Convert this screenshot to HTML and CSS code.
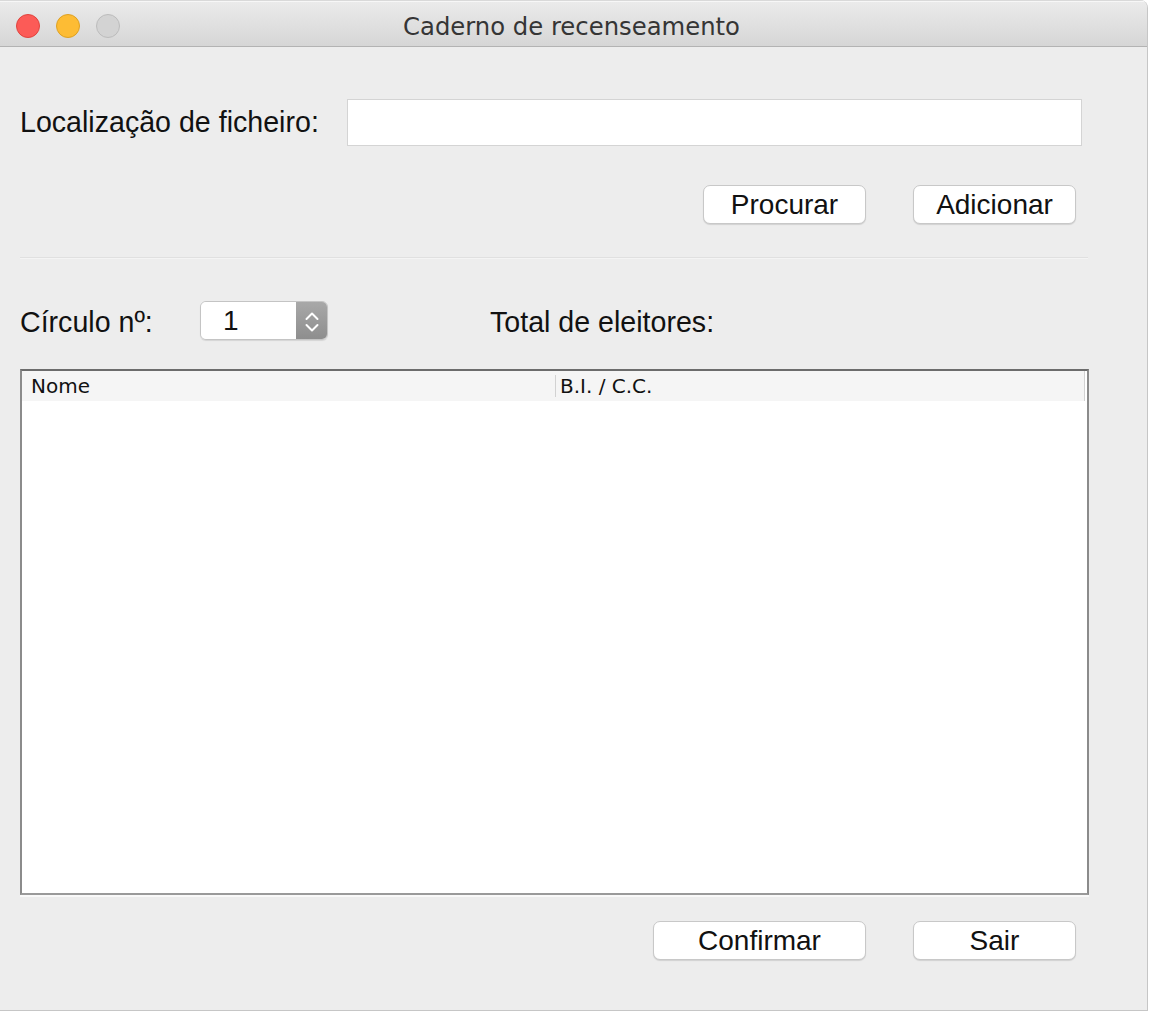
FILE: index.html
```html
<!DOCTYPE html>
<html lang="pt">
<head>
<meta charset="utf-8">
<title>Caderno de recenseamento</title>
<link rel="stylesheet" href="styles.css">
</head>
<body>
<div class="window">
  <div class="titlebar">
    <div class="lights">
      <span class="light red"></span>
      <span class="light yellow"></span>
      <span class="light gray"></span>
    </div>
    <div class="title">Caderno de recenseamento</div>
    <div class="spacer"></div>
  </div>
  <div class="content">
    <div class="row row-file">
      <label class="label label-file">Localização de ficheiro:</label>
      <div class="textfield"></div>
    </div>
    <div class="row row-buttons">
      <button class="btn">Procurar</button>
      <button class="btn">Adicionar</button>
    </div>
    <div class="separator"></div>
    <div class="row row-circle">
      <label class="label label-circle">Círculo nº:</label>
      <div class="spinner">
        <div class="spinner-value">1</div>
        <div class="stepper">
          <svg width="32" height="39" viewBox="0 0 32 39">
            <path d="M10.5 18 L16 12.5 L21.5 18" fill="none" stroke="#fff" stroke-width="2" stroke-linecap="round" stroke-linejoin="round"/>
            <path d="M10.5 24 L16 29.5 L21.5 24" fill="none" stroke="#fff" stroke-width="2" stroke-linecap="round" stroke-linejoin="round"/>
          </svg>
        </div>
      </div>
      <span class="label label-total">Total de eleitores:</span>
    </div>
    <div class="table">
      <div class="thead">
        <div class="th th-name">Nome</div>
        <div class="th th-id">B.I. / C.C.</div>
      </div>
      <div class="tbody"></div>
    </div>
    <div class="row row-bottom">
      <button class="btn btn-wide">Confirmar</button>
      <button class="btn">Sair</button>
    </div>
  </div>
</div>
</body>
</html>
```
FILE: styles.css
```css
html, body {
  margin: 0;
  padding: 0;
  background: #ffffff;
}

.window {
  width: 1147px;
  height: 1010px;
  background: #ededed;
  border-right: 1px solid #c6c6c6;
  border-bottom: 1px solid #c6c6c6;
  border-top-right-radius: 8px;
  overflow: hidden;
  display: flex;
  flex-direction: column;
}

.titlebar {
  flex: none;
  border-top: 1px solid #d9d9d9;
  box-shadow: inset 0 1px 0 #f7f7f7;
  border-bottom: 1px solid #b3b3b3;
  background: linear-gradient(#ebebeb, #d6d6d6);
  display: grid;
  grid-template-columns: 1fr auto 1fr;
  align-items: center;
  box-sizing: border-box;
  height: 47px;
}

.lights {
  display: flex;
  gap: 16px;
  padding-left: 16px;
  padding-top: 4px;
}

.light {
  width: 22px;
  height: 22px;
  border-radius: 50%;
  display: block;
}

.red { background: #fc5b57; border: 1px solid #e0443e; }
.yellow { background: #fdbc34; border: 1px solid #dea123; }
.gray { background: #d3d3d3; border: 1px solid #bcbcbc; }

.title {
  font-family: "DejaVu Sans", sans-serif;
  font-size: 24.3px;
  color: #353535;
  padding-top: 6px;
  padding-right: 4px;
}

.content {
  padding: 0 58px 0 20px;
  font-family: "Liberation Sans", Arial, sans-serif;
  font-size: 28px;
  color: #111;
}

.row {
  display: flex;
  align-items: center;
}

.label {
  font-size: 28.6px;
  color: #111;
  white-space: nowrap;
}

.row-file {
  margin-top: 52px;
  height: 47px;
}

.label-file {
  width: 327px;
  flex: none;
}

.textfield {
  width: 733px;
  height: 45px;
  background: #fff;
  border: 1px solid #d4d4d4;
}

.row-buttons {
  margin-top: 39px;
  justify-content: flex-end;
  gap: 47px;
  padding-right: 13px;
}

.btn {
  width: 163px;
  height: 39px;
  box-sizing: border-box;
  background: #fff;
  border: 1px solid #c8c8c8;
  border-radius: 7px;
  box-shadow: 0 1px 1px rgba(0, 0, 0, 0.12);
  font-family: "Liberation Sans", Arial, sans-serif;
  font-size: 28px;
  color: #111;
  padding: 0;
  line-height: 36px;
}

.btn-wide {
  width: 213px;
}

.separator {
  margin-top: 33px;
  height: 1px;
  width: 1068px;
  background: #e0e0e0;
  box-shadow: 0 1px 0 #f4f4f4;
}

.row-circle {
  margin-top: 43px;
  height: 39px;
}

.label-circle {
  width: 180px;
  flex: none;
  padding-top: 3px;
}

.spinner {
  width: 128px;
  height: 39px;
  box-sizing: border-box;
  display: flex;
  border: 1px solid #c4c4c4;
  border-radius: 6px;
  overflow: hidden;
  box-shadow: 0 1px 1px rgba(0, 0, 0, 0.1);
  flex: none;
}

.spinner-value {
  flex: 1;
  background: #fff;
  padding-left: 22px;
  line-height: 37px;
  font-size: 28px;
}

.stepper {
  width: 32px;
  flex: none;
  background: linear-gradient(#a9a9a9, #8d8d8d);
  display: flex;
  align-items: center;
  justify-content: center;
  margin: -1px -1px -1px 0;
}

.stepper svg {
  display: block;
}

.label-total {
  margin-left: 162px;
  padding-top: 3px;
}

.table {
  margin-top: 29px;
  width: 1069px;
  height: 526px;
  box-sizing: border-box;
  border-top: 2px solid #6c6c6c;
  border-left: 2px solid #8b8b8b;
  border-right: 2px solid #8b8b8b;
  border-bottom: 2px solid #9a9a9a;
  background: #fff;
  box-shadow: 0 2px 0 #f9f9f9;
  display: flex;
  flex-direction: column;
}

.thead {
  height: 30px;
  flex: none;
  background: #f5f5f5;
  display: flex;
  align-items: center;
  font-family: "DejaVu Sans", sans-serif;
  font-size: 20px;
  color: #111;
  margin-right: 2px;
  border-right: 1px solid #d2d2d2;
}

.th {
  height: 22px;
  line-height: 22px;
  display: flex;
  align-items: center;
}

.th-name {
  width: 524px;
  padding-left: 9px;
  border-right: 1px solid #d2d2d2;
}

.th-id {
  padding-left: 4px;
}

.tbody {
  flex: 1;
}

.row-bottom {
  margin-top: 26px;
  justify-content: flex-end;
  gap: 47px;
  padding-right: 13px;
}
```
